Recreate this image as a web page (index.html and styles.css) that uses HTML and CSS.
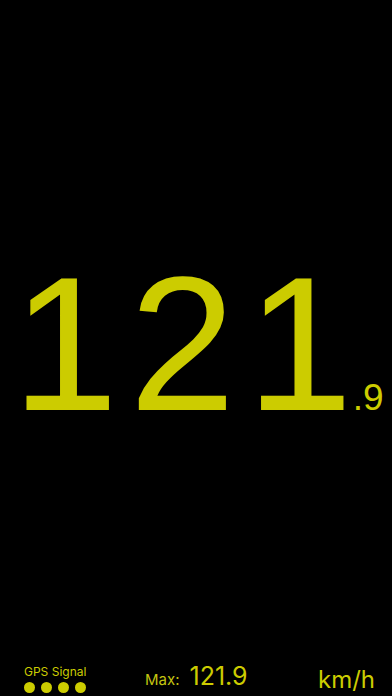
FILE: index.html
```html
<!DOCTYPE html>
<html>
<head>
<meta charset="utf-8">
<link rel="stylesheet" href="styles.css">
</head>
<body>
<div class="screen">
  <main class="speed">
    <span class="speed-int"><span>1</span><span>2</span><span>1</span></span><span class="speed-dec">.9</span>
  </main>
  <footer class="bar">
    <div class="gps">
      <div class="gps-label">GPS Signal</div>
      <div class="dots"><span class="dot"></span><span class="dot"></span><span class="dot"></span><span class="dot"></span></div>
    </div>
    <div class="max"><span class="max-label">Max:</span><span class="max-val">121.9</span></div>
    <div class="unit">km/h</div>
  </footer>
</div>
</body>
</html>
```
FILE: styles.css
```css
html, body { margin: 0; padding: 0; background: #000; }
body { font-family: "Inter", "Liberation Sans", sans-serif; color: #cccc00; }
.screen { width: 392px; height: 696px; display: flex; flex-direction: column; overflow: hidden; }
.speed { flex: 1; display: flex; align-items: baseline; padding: 248px 0 0 12px; line-height: 1; }
.speed-int { display: inline-flex; align-items: baseline; gap: 11px; font-family: "Liberation Sans", sans-serif; font-size: 191px; }
.speed-dec { font-family: "Liberation Sans", sans-serif; font-size: 37px; margin-left: 0; }
.bar { display: flex; align-items: flex-end; padding: 0 17px 3px 24px; height: 36px; }
.gps { display: flex; flex-direction: column; gap: 3px; width: 121px; }
.gps-label { font-size: 12px; line-height: 14px; }
.dots { display: flex; gap: 6px; }
.dot { width: 11px; height: 11px; border-radius: 50%; background: #cccc00; }
.max { display: flex; align-items: baseline; gap: 10px; flex: 1; line-height: 26px; }
.max-label { font-size: 15px; color: #c4c410; }
.max-val { font-size: 25px; }
.unit { font-size: 24px; line-height: 26px; }
```
